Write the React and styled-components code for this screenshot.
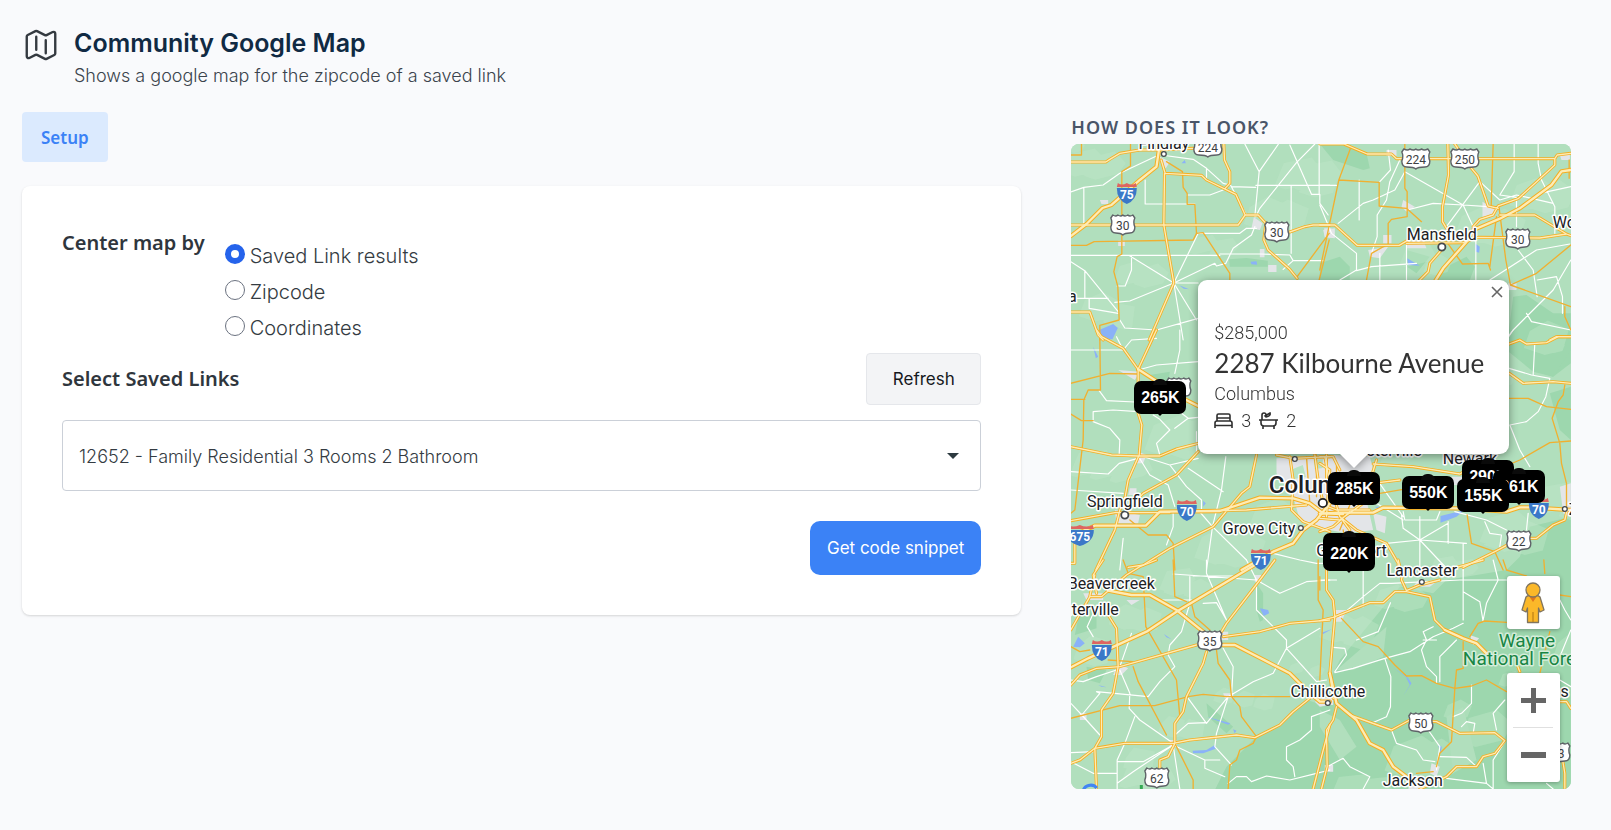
import React, { useState } from "react";
import styled, { createGlobalStyle } from "styled-components";

const GlobalStyle = createGlobalStyle`
  *, *::before, *::after { box-sizing: border-box; }
  body {
    margin: 0;
    background: #f9fafc;
    color: #2d3748;
    font-family: Inter, "Noto Sans", sans-serif;
    font-size: 18px;
    font-weight: 300;
  }
  button, select, input { font: inherit; color: inherit; }
`;

const label = `"Noto Sans", "Open Sans", sans-serif`;

/* ---------- page frame ---------- */

const Page = styled.main`
  padding: 27px 40px 40px 22px;
`;

const Header = styled.header`
  display: flex;
  gap: 14px;
  margin-bottom: 20px;
`;

const HeaderIcon = styled.svg`
  width: 38px;
  height: 38px;
  margin-top: -1px;
  flex: none;
  stroke: #343a40;
`;

const Title = styled.h1`
  margin: 0;
  font-size: 25px;
  line-height: 33px;
  font-weight: 600;
  color: #102a43;
`;

const Subtitle = styled.p`
  margin: 0;
  line-height: 32px;
  color: #3b444d;
`;

const Columns = styled.div`
  display: grid;
  grid-template-columns: 2fr 1fr;
  gap: 50px;
  align-items: start;
`;

/* ---------- form ---------- */

const Tab = styled.button`
  display: block;
  height: 50px;
  margin-bottom: 24px;
  padding: 0 19px;
  border: 0;
  border-radius: 4px;
  background: #dbeafe;
  color: #3b82f6;
  font-family: ${label};
  font-size: 17px;
  font-weight: 600;
`;

const Card = styled.form`
  padding: 40px;
  border-radius: 8px;
  background: #fff;
  box-shadow: 0 1px 3px rgba(0, 0, 0, 0.1), 0 1px 2px rgba(0, 0, 0, 0.06);
`;

const CenterBy = styled.div`
  display: flex;
  gap: 20px;
  margin-bottom: 7px;
`;

const FieldLabel = styled.label`
  font-family: ${label};
  font-size: 20px;
  line-height: 34px;
  font-weight: 600;
  color: #2f363d;
`;

const RadioList = styled.div`
  display: grid;
  padding-top: 12px;
`;

const RadioRow = styled.label`
  display: flex;
  gap: 5px;
  height: 36px;
  font-size: 20px;
  line-height: 36px;
  color: #343b42;
`;

const Radio = styled.input`
  appearance: none;
  width: 20px;
  height: 20px;
  margin: 6px 0 0;
  border: 1px solid #6b7280;
  border-radius: 50%;
  background: #fff;

  &:checked {
    border: 6px solid #2563eb;
  }
`;

const LinksRow = styled.div`
  display: flex;
  justify-content: space-between;
  align-items: center;
  margin-bottom: 15px;
`;

const RefreshButton = styled.button`
  width: 115px;
  height: 52px;
  border: 1px solid #e5e7eb;
  border-radius: 4px;
  background: #f3f4f6;
  color: #16191d;
  font-size: 17px;
  font-weight: 400;
`;

const SelectBox = styled.div`
  display: grid;
  grid-template-columns: 1fr 20px;
  align-items: center;
  margin-bottom: 30px;
`;

const Select = styled.select`
  grid-area: 1 / 1 / 2 / 3;
  appearance: none;
  width: 100%;
  height: 71px;
  padding: 2px 48px 0 16px;
  border: 1px solid #cbd0d8;
  border-radius: 4px;
  background: #fff;
  color: #343b42;
`;

const Arrow = styled.svg`
  grid-area: 1 / 2;
  justify-self: end;
  width: 12px;
  height: 6px;
  margin-right: 22px;
  fill: #2d3a40;
  pointer-events: none;
`;

const Actions = styled.div`
  display: flex;
  justify-content: flex-end;
`;

const PrimaryButton = styled.button`
  height: 54px;
  padding: 0 17px;
  border: 0;
  border-radius: 10px;
  background: #3b82f6;
  color: #fff;
  font-size: 17px;
  font-weight: 400;
`;

/* ---------- map preview ---------- */

const PreviewTitle = styled.h2`
  margin: 0;
  height: 32px;
  font-family: ${label};
  font-size: 18px;
  line-height: 30px;
  font-weight: 600;
  letter-spacing: 1px;
  color: #4a5568;
`;

const MapFrame = styled.div`
  position: relative;
  height: 645px;
  overflow: hidden;
  border-radius: 8px;
  background: #b1dfbd;
`;

const MapArt = styled.svg`
  display: block;
  width: 100%;
  height: 100%;
  font-family: Roboto, sans-serif;
  font-weight: 400;
`;

const Pin = styled.button`
  position: absolute;
  left: ${(p) => p.$x}px;
  top: ${(p) => p.$y}px;
  width: 52px;
  height: ${(p) => (p.$stacked ? 38 : 33)}px;
  padding: ${(p) => (p.$stacked ? 4 : 0)}px 0 0;
  border: 0;
  border-radius: 7px;
  background: #000;
  color: #fff;
  font-family: "Liberation Sans", Arial, sans-serif;
  font-size: 16px;
  font-weight: 700;

  &::before, &::after {
    content: "";
    position: absolute;
    left: 50%;
    transform: translateX(-50%);
  }
  &::before {
    top: -2px;
    width: 14px;
    height: 6px;
    border-radius: 7px 7px 0 0;
    background: #0b0b0b;
  }
  &::after {
    bottom: -2px;
    border: 2px solid transparent;
    border-top-color: #000;
    border-bottom: 0;
  }
`;

const InfoWindow = styled.article`
  position: absolute;
  left: 127px;
  top: 136px;
  width: 311px;
  height: 174px;
  padding: 40px 16px 0;
  border-radius: 9px;
  background: #fff;
  color: #333;
  font-family: Roboto, sans-serif;
  filter: drop-shadow(0 2px 5px rgba(0, 0, 0, 0.4));

  &::after {
    content: "";
    position: absolute;
    left: 141px;
    top: 173px;
    border: 15px solid transparent;
    border-top-color: #fff;
    border-bottom: 0;
  }
`;

const InfoText = styled.p`
  margin: 0;
  line-height: 26px;
  font-size: 18px;
`;

const InfoTitle = styled.h3`
  margin: 0;
  font-family: Lato, sans-serif;
  font-size: 26px;
  line-height: 35px;
  font-weight: 400;
  white-space: nowrap;
`;

const Facts = styled.div`
  display: flex;
  align-items: center;
  gap: 8px;
  height: 27px;
  font-size: 18px;
`;

const FactIcon = styled.svg`
  width: 19px;
  height: 18px;
  fill: none;
  stroke: #2e2e2e;
  stroke-width: 1.6;
`;

const CloseButton = styled.button`
  position: absolute;
  top: 0;
  right: 0;
  width: 25px;
  height: 24px;
  padding: 0;
  border: 0;
  background: none;

  svg { display: block; margin: 6px 7px; stroke: #666; stroke-width: 1.6; }
`;

const Controls = styled.div`
  position: absolute;
  right: 11px;
  bottom: 7px;
  display: grid;
  gap: 44px;
  width: 53px;
`;

const ControlBox = styled.div`
  display: grid;
  justify-items: center;
  border-radius: 3px;
  background: #fff;
  box-shadow: 0 1px 4px rgba(0, 0, 0, 0.3);
`;

const ControlButton = styled.button`
  display: grid;
  place-items: center;
  width: 100%;
  height: ${(p) => (p.$tall ? 54 : 53)}px;
  padding: 0;
  border: 0;
  background: none;
`;

const Divider = styled.span`
  width: 40px;
  height: 1px;
  background: #e0e0e0;
`;

/* ---------- map data: six sheets, each drawn at three units per pixel ---------- */

const sheets = [
  {
    at: [-11, -44],
    forest: ["M508 478L560 474L624 482V500H510Z"],
    town: ["M120 300H145V312H125Z", "M300 170L330 185L318 205L304 190Z", "M175 422H195V438H175Z", "M582 352L608 370L600 390L575 385Z", "M600 447H614V472H600Z", "M625 495H650V516H625Z", "M793 385H815V412H795Z"],
    water: ["M118 690L160 672L174 684L158 718H120Z", "M365 190L375 180L378 190Z", "M572 485L590 484L592 494L575 493Z", "M358 556L388 568L372 566Z"],
    minor: ["M33 276L72 262L130 255L180 220L290 168", "M72 262V372", "M256 240V312H405", "M304 165L400 178L440 205V232M440 205L490 250L512 255", "M382 285H450L490 270", "M512 255L560 345M515 260L588 262", "M555 132L598 215L585 350M656 132L598 215", "M690 135L755 283H780V310L805 345M778 132V283", "M765 132L710 188L600 325L588 350", "M694 256V460M588 256H810", "M33 466H480M342 549L415 400H540L560 385H590", "M585 380L575 405L520 445L498 490L470 498L465 490L342 549", "M33 485L75 512L175 635M207 466L342 549M215 466V510L196 558H172", "M75 512V595M33 595H145M342 549H415M342 549L410 660M342 549L370 720", "M165 607L210 603L342 549M480 462H600L690 465L700 482H790M88 595V625L175 640", "M180 660L195 684L290 690L415 655M700 482L670 508"],
    road: ["M33 165H65V132M212 132V198L186 215V462L172 470L162 515L174 560L178 660L120 676V720", "M320 185L368 215L370 262L382 280V313H405L410 400L430 398L510 520V540", "M33 436H80L103 425L400 420L410 400", "M808 400L712 530M808 420L778 540"],
    highway: ["M33 186H138L150 178L180 160L240 150H300L400 145", "M33 375H535L556 345H595L618 370L612 420L625 450L690 508L712 535", "M304 180L316 220L425 226L440 240L528 283L556 345", "M314 220L312 375L342 549L268 720", "M492 132L494 180L510 215V250L495 266", "M690 396L735 380L760 375H810", "M33 636H90L115 705L130 720"],
    freeway: ["M33 408L80 372L128 324L155 315L240 240L290 200L300 132"],
  },
  {
    at: [249, -44],
    forest: ["M260 450L330 470L290 520L262 500Z", "M380 500L440 470L465 500L450 540H350Z", "M580 590L620 585L700 640L753 640V790L700 830L640 815L560 750Z", "M0 490L60 470L90 500V540H0Z", "M0 132H70L140 160L150 205L130 210L40 180Z"],
    town: ["M488 305L530 330L520 352L488 350Z", "M200 150H230V168H200Z", "M250 300L285 320L260 335L245 320Z", "M190 405H215V430H190Z", "M145 450L205 440L180 475L150 470Z", "M262 425L310 420L320 445H262Z", "M10 390L45 385V415L15 412Z", "M720 165L750 160V180H725Z", "M565 550H590V570H565Z"],
    water: ["M262 475L300 497L265 495Z", "M465 430L480 440L478 458L468 455Z"],
    minor: ["M205 150L212 210L180 245M240 180L210 245L200 300L172 345V410L155 460", "M255 215L430 315L505 320M255 215L225 270L160 300L130 310L55 370", "M118 240V360M0 256H50M583 132V215L540 285L590 292V380", "M655 132V190L665 240L705 320V400M480 245L380 380M480 245L540 300L590 285L700 310", "M262 330L340 310L430 315L460 380M0 315L35 400L110 460V510L60 540", "M180 460V540M260 430V540M468 420V540M572 430V400", "M595 450L640 510L652 590M510 540L650 450L750 432M753 480L700 570L580 690L560 720", "M652 540L710 530L728 590V640M620 640L635 665L753 690M753 260L660 280M110 512L155 500L290 490"],
    road: ["M92 145L57 240L0 510M57 240L178 247V318L260 325L305 365", "M255 132V265L262 275V350L215 358L205 370V432L155 460L140 540", "M520 132L514 320M538 325L558 480L572 555M530 350L510 500", "M380 425L428 492L505 490L512 510M753 435L650 520L572 555L753 620", "M735 620V650L753 690M748 235V180"],
    highway: ["M0 132H72L142 162H215L230 176H705L712 165L753 160", "M384 132L386 225L368 320V365L380 385", "M405 132L455 205L474 228L505 318L535 325", "M260 430L430 428L475 412L660 414L740 402L753 407", "M705 176V195L595 296L535 318L520 345L480 358L460 380", "M540 345H645L740 402", "M295 545L325 515L330 490L365 450", "M690 720L710 710H753", "M0 375H45L112 436H238L262 422"],
    freeway: ["M345 545L370 505L445 420L460 390L540 356L600 325L695 255L725 214L753 210"],
  },
  {
    at: [-11, 186],
    forest: ["M270 135L330 125L325 160L290 165Z"],
    town: ["M175 120L240 125L225 150Z", "M210 475H230V495H205Z", "M165 540L240 555L235 580H170Z", "M235 365L260 375L250 400H225Z", "M650 385L810 375L930 380L945 440L920 510L940 600L860 610L810 600L720 570L700 500L650 430Z"],
    water: ["M118 0H165L150 25L125 20Z", "M100 50L115 80L108 85Z", "M430 512L438 520L430 530Z"],
    minor: ["M33 60H190L215 30L290 25M190 60L170 20", "M235 120L290 105L415 95M360 0V60L345 130M118 182L140 212L225 216", "M100 245V275L150 295L180 330L178 375M100 245L160 240L235 245", "M280 255L300 268L330 300L290 340L300 375M235 375L330 405L415 385", "M33 425L145 432L178 400L235 385M385 265L345 295M410 305V370", "M330 405L380 470L425 510V540M498 380L485 480L458 590M385 415L490 485", "M235 378L270 435L325 465L345 530M33 480L190 490M340 550V590L320 645", "M458 590L440 720M458 590L560 690M640 670L720 690L770 700H810", "M190 625L180 720M458 590L415 540M280 240L345 235L385 265L415 262"],
    road: ["M120 20L122 180H85L72 210L70 330L45 540L33 550", "M33 160L150 130L235 132M33 208H75M33 252L65 272H100", "M210 570L265 615H320L340 640L345 720", "M770 375V500M740 380L750 520"],
    highway: ["M110 0L125 20L190 55L235 118", "M290 0L235 118V250L246 285L238 375L205 450L196 500L180 540L165 600L108 720", "M33 350L155 375L235 378H300L350 357L415 340", "M33 572L165 548H330", "M410 543L560 540L740 525", "M196 548L250 490L350 435L415 365", "M205 712L250 705L330 655L460 590L545 490L570 470L590 375", "M690 380L700 450L695 540L730 575L810 605", "M765 375L775 450L790 520", "M650 375L700 385L810 380M800 375V490", "M45 640V700H33"],
    freeway: ["M235 118L300 160L340 190L395 218L415 228", "M33 620L105 587H258L300 545L480 543L600 503L700 505L750 520L790 550L850 552", "M545 720L640 665L700 640L730 600L770 570L810 520"],
  },
  {
    at: [249, 186],
    forest: ["M568 0H753V60L700 140L640 120L570 60Z", "M753 170L690 190L720 300L753 330Z", "M630 590L753 560V720H560L600 680Z"],
    town: ["M160 550L200 560L195 610L170 600Z", "M395 440H435V465H390Z", "M720 470L753 460V560L730 550Z", "M115 405L160 400L150 425Z"],
    water: ["M362 558L425 542H432L410 560L362 578Z", "M165 530L185 530L180 540Z"],
    minor: ["M568 115L635 135L690 145L678 200L655 245L620 275L570 285M645 38L640 135", "M570 285L600 360L630 410M250 545L255 570H350L360 545", "M170 520L250 570M245 555L250 595L300 630L440 640M300 560V720", "M385 580L300 630L200 640M430 640V720M300 630L385 720", "M495 575L510 610L545 615L540 650M405 545L500 570L560 600M625 550L620 600M568 15L580 0", "M165 440L250 560M385 575V640"],
    road: ["M568 205H625L680 230L753 238M735 165L730 195L715 215L697 265L720 340L725 400L740 460V540", "M753 333L690 338L600 390L530 420M180 490L250 478", "M442 555L455 640L525 665L550 720M70 600L90 720", "M50 400V540M100 500L60 600"],
    highway: ["M0 400L30 420L20 560M15 380L30 460L60 560L90 600", "M0 565L60 570L130 520L170 390M0 380H40L60 420", "M0 520L50 540H150", "M160 402L280 410L420 432L440 420", "M0 605L40 590L90 545M60 560L110 600L200 640L235 700V720", "M430 712L525 665L600 625H650L700 585L735 570L742 540", "M568 130L610 160L700 155L753 160", "M568 42L600 30L620 42L680 38L715 20H753", "M110 510L160 460L240 450"],
    freeway: ["M0 551L60 548H160L190 533L420 535L560 545L600 532H630L753 540"],
  },
  {
    at: [-11, 416],
    forest: ["M590 70L610 100V180L600 185L590 150Z", "M590 530L660 495L740 420L810 440V700H460L500 620Z", "M60 150H110V205L45 225Z", "M80 320L140 330L120 370L85 360Z", "M440 430L520 500L500 520L445 470Z"],
    town: ["M175 310L205 325L185 345H160Z", "M200 120H240L215 135Z", "M70 100H130V120H80Z", "M480 215H505V240H485Z", "M330 540H350V560H330Z", "M60 460H80V480H60Z", "M490 400H520V415H495Z", "M765 425L810 410V435L780 440Z", "M585 45H605V65H585Z"],
    water: ["M40 260L55 230L75 250L60 262Z", "M398 572L440 570L465 555L468 566L430 580H400Z", "M600 145L625 150L628 160L612 168Z", "M440 470L512 490L505 494Z", "M312 222L335 238L320 232Z", "M115 375L140 382L125 380Z", "M520 508L530 512L524 520Z"],
    minor: ["M105 150L82 200L100 230M33 360L70 365L110 350L170 330", "M180 330L210 400L208 445L240 480L340 550M66 465L120 400L110 395L265 410L300 365L345 320L325 285L330 255L365 215L390 130V50", "M66 465L33 430M66 465L120 525M225 470L195 550L172 600V687", "M33 578L105 575M33 605L100 640H172M172 670L220 635L340 555M340 555L360 687", "M340 555L435 600H480M435 600V625L495 650M385 415L440 490L505 410", "M345 525L385 490L440 488M505 410L470 520L465 560L515 615", "M515 410L520 320L490 265M505 410L580 365L640 340L680 265L780 205", "M590 65V150L680 240L680 265L770 365L800 360M590 60L660 100L740 65L810 60", "M440 0V40L500 180M340 42L590 60M400 48H520M300 120H395", "M810 450L755 470V510L720 540L680 560V600L700 620L705 650", "M505 670L530 650H560L575 665L620 648L690 660L770 640L810 630", "M180 320L215 220M430 130L470 128L500 180M560 0L590 60", "M172 605L250 605L330 560"],
    road: ["M190 0L205 40L250 50L258 200L350 360L360 470", "M220 320L235 365L320 525M345 550L400 660V687", "M33 475L180 437H285L385 410L430 403L500 410H600L690 410", "M395 130L405 170L450 210M470 270L475 310L510 360L515 410L540 440L545 470L590 530L580 550L540 570L530 600L510 615L505 687", "M340 0L345 110L380 125M775 0V120L790 150L780 360", "M33 260L60 275L90 270M145 300L218 305"],
    highway: ["M33 210L90 110H125L200 45L240 20L290 0M105 45L90 108M130 0L100 45L110 100", "M145 165L170 205L175 320L160 400L125 450V530L105 565L60 600L33 610", "M33 375L60 345L110 325L180 320L410 255", "M485 215L500 190L600 60L645 0", "M490 230L600 215L690 190L810 180", "M440 275L430 310L380 410L370 455L345 490V550L325 590L300 600V630", "M105 565L195 550H340L390 540L530 525L585 533L660 495L700 455L750 415", "M105 565L110 687", "M810 495L785 590L760 687"],
    freeway: ["M145 92L215 105H270L350 150L430 215", "M33 322L85 295L260 215L350 155L590 12", "M490 255H525L690 340L740 390L780 425H810"],
  },
  {
    at: [249, 416],
    forest: ["M60 300L200 130L240 80L340 100L380 60L560 30L753 30V700H0V450L40 340Z"],
    light: ["M0 450L60 480L110 560L60 600L0 500Z", "M50 330L200 200L190 290L100 330Z", "M380 470L430 440L470 600L400 640Z"],
    town: ["M45 150L80 150L65 185H45Z", "M295 60L350 65L330 80H280Z", "M450 225L478 235L460 255Z", "M5 415L40 415V435H5Z", "M15 615H40V635H15Z", "M335 610L360 620L350 650L330 640Z", "M270 660H310V690H265Z"],
    water: ["M222 325L262 350L275 370L250 408L270 375L258 350Z", "M355 555L366 560L362 580Z", "M5 218L35 208L10 222Z"],
    minor: ["M130 0V140M0 60H50M212 128L175 215L110 240M40 262L75 265L80 285L45 335", "M45 338L100 325L195 295L270 275L340 230L400 205L430 190", "M195 295L213 350L212 440L200 470L155 490M60 170L130 110L180 70H215L420 60H560", "M430 30V180M430 95L480 125L490 185M520 0L535 60L500 130L490 180", "M340 200L310 215L320 240L305 270L320 320L350 350V370M310 240H350", "M410 240L360 290V365M455 375V430L425 460L400 470M425 500L440 485L465 490L460 520", "M555 420L520 460L530 510M215 510L230 550L290 570L310 600L345 605", "M325 510L360 560L350 630M360 590L440 592L470 620M380 655L500 670L520 687M500 670L490 610", "M555 545L520 600V687M22 620L70 595L90 620L150 650L130 687", "M720 360L753 380M720 290L753 210M680 670L700 687M720 120L735 150L753 180"],
    road: ["M65 175L130 245L175 260L225 315L260 348L305 347L350 370L405 385L455 378L500 360L560 395", "M430 245V325L410 330L405 385L395 545L360 580L350 620", "M450 230L475 190L495 183L560 187M550 0L560 30L620 48M675 40L672 0", "M690 215L660 340M720 105L753 110M290 640L340 635M0 90V50"],
    highway: ["M20 30V90L40 120L45 170L30 340L40 415", "M0 182L40 172L150 128H190L225 95H260L330 110L345 180L375 210L430 235", "M250 30L245 60L260 92L300 75L360 60M400 25L490 0M235 0L240 20", "M50 430L90 465L215 510L270 480L350 485L420 520L525 518L555 542L525 580L490 590L470 620H410L380 650L300 687", "M50 440L40 480L20 510L22 620L5 687", "M590 310L600 335M720 425H740L753 445M725 580L735 640V687"],
    freeway: ["M30 340L50 430L110 480L150 550L190 570L220 620L260 650", "M375 210L430 235L470 250L500 280"],
  },
];

// Scattered fields that break up the ground colour.
const fields = Array.from({ length: 90 }, (_, i) => {
  const x = (i * 137) % 500;
  const y = (i * 211 + (i % 7) * 29) % 645;
  const a = 8 + (i % 5) * 5;
  const b = 6 + (i % 4) * 5;
  return `M${x} ${y}l${a} ${-b / 2}l${b} ${a / 2}l${-a / 3} ${b}l${-a} ${a / 4}l${-b} ${-b / 3}z`;
}).join("");

const places = [
  { t: "Findlay", x: 93, y: 5, dot: [93, 10] },
  { t: "Lima", x: 6, y: 158, anchor: "end" },
  { t: "Mansfield", x: 371, y: 96, dot: [371, 103], big: true },
  { t: "Wooster", x: 482, y: 84, anchor: "start" },
  { t: "Springfield", x: 54, y: 363, dot: [54, 371], big: true },
  { t: "Grove City", x: 152, y: 390, anchor: "start", dot: [230, 384] },
  { t: "Groveport", x: 316, y: 412, anchor: "end" },
  { t: "Westerville", x: 351, y: 312, anchor: "end", dot: [224, 315] },
  { t: "Newark", x: 372, y: 320, anchor: "start" },
  { t: "Zanesville", x: 498, y: 371, anchor: "start", dot: [494, 365] },
  { t: "Beavercreek", x: 84, y: 445, anchor: "end" },
  { t: "Centerville", x: 48, y: 471, anchor: "end" },
  { t: "Lancaster", x: 351, y: 432, dot: [351, 438] },
  { t: "Chillicothe", x: 257, y: 553, dot: [257, 559] },
  { t: "Jackson", x: 342, y: 642 },
  { t: "Athens", x: 498, y: 553, anchor: "end" },
];

const usRoutes = [
  [137, 3, "224"], [52, 81, "30"], [206, 88, "30"], [345, 15, "224"], [394, 15, "250"], [447, 95, "30"],
  [108, 244, "68"], [448, 397, "22"], [139, 497, "35"], [86, 634, "62"], [350, 579, "50"], [487, 609, "33"],
];

const interstates = [[56, 50, "75"], [116, 367, "70"], [9, 392, "675"], [190, 416, "71"], [468, 365, "70"], [31, 507, "71"]];

const homes = [
  { price: "265K", x: 63, y: 237 },
  { price: "285K", x: 257, y: 328 },
  { price: "550K", x: 331, y: 332 },
  { price: "290K", x: 391, y: 316 },
  { price: "361K", x: 422, y: 326 },
  { price: "155K", x: 386, y: 335 },
  { price: "220K", x: 252, y: 389, stacked: true },
];

function Lines({ kind, stroke, width }) {
  return (
    <g fill="none" stroke={stroke} strokeWidth={width} strokeLinejoin="round" strokeLinecap="round">
      {sheets.map((s, i) => (
        <path key={i} transform={`translate(${s.at}) scale(.33333)`} d={s[kind].join("")} />
      ))}
    </g>
  );
}

function Areas({ kind, fill }) {
  return (
    <g fill={fill}>
      {sheets.map((s, i) => s[kind] && (
        <path key={i} transform={`translate(${s.at}) scale(.33333)`} d={s[kind].join("")} />
      ))}
    </g>
  );
}

function UsShield({ x, y, n }) {
  const k = n.length > 2 ? 14 : 12;
  return (
    <g transform={`translate(${x} ${y})`}>
      <path
        d={`M${-k + 2} -10Q${-k / 2 - 1} -8 ${-k / 2 + 1} -10Q-2 -8 0 -10Q2 -8 ${k / 2 - 1} -10Q${k / 2 + 1} -8 ${k - 2} -10L${k} -7Q${k - 2} -3 ${k} 2Q${k} 8 ${k - 5} 8Q2 8 0 10Q-2 8 ${-k + 5} 8Q${-k} 8 ${-k} 2Q${-k + 2} -3 ${-k} -7Z`}
        fill="#fff" stroke="#5f6368" strokeWidth="1.4" strokeLinejoin="round"
      />
      <text y="4.5" textAnchor="middle" fontSize="12" fill="#3c4043">{n}</text>
    </g>
  );
}

function Interstate({ x, y, n }) {
  const k = n.length > 2 ? 14 : 10;
  return (
    <g transform={`translate(${x} ${y})`}>
      <path d={`M${-k + 1} -11Q${-k / 2} -8 0 -11Q${k / 2} -8 ${k - 1} -11L${k} -7H${-k}Z`} fill="#de6560" />
      <path d={`M${-k} -6H${k}Q${k} 6 0 10Q${-k} 6 ${-k} -6Z`} fill="#3b78c8" />
      <text y="5" textAnchor="middle" fontSize="12" fontWeight="700" fill="#fff">{n}</text>
    </g>
  );
}

function OhioMap() {
  return (
    <MapArt viewBox="0 0 500 645" preserveAspectRatio="xMidYMid slice" role="img" aria-label="Map of central Ohio">
      <rect width="500" height="645" fill="#b1dfbd" />
      <Areas kind="forest" fill="#9dd7ae" />
      <path d={fields} fill="#bfe6c8" opacity="0.45" />
      <Areas kind="light" fill="#b1dfbd" />
      <Areas kind="town" fill="#e3e5e8" />
      <path d="M222 325l10-4 3 12-12 2zM243 316l9-1v9l-8 1z" fill="#b7e3c4" />
      <Areas kind="water" fill="#8ab2f8" />
      <Lines kind="minor" stroke="#fff" width="3.5" />
      <Lines kind="road" stroke="#f0b030" width="4" />
      <Lines kind="highway" stroke="#f4ae22" width="9" />
      <Lines kind="freeway" stroke="#f4ae22" width="13" />
      <Lines kind="highway" stroke="#fdecb5" width="4" />
      <Lines kind="freeway" stroke="#fdecb5" width="7" />

      {usRoutes.map(([x, y, n], i) => <UsShield key={i} x={x} y={y} n={n} />)}
      {interstates.map(([x, y, n], i) => <Interstate key={i} x={x} y={y} n={n} />)}

      {places.map((p) => p.dot && (
        <circle key={p.t} cx={p.dot[0]} cy={p.dot[1]} r={p.big ? 3.6 : 2.4} fill="#fff" stroke="#45494d" strokeWidth={p.big ? 1.8 : 1.3} />
      ))}
      <circle cx="252" cy="359" r="4.2" fill="#fff" stroke="#222" strokeWidth="1.8" />

      <g fontSize="16" fill="#202124" stroke="#fff" strokeWidth="3" strokeLinejoin="round" paintOrder="stroke">
        {places.map((p) => (
          <text key={p.t} x={p.x} y={p.y} textAnchor={p.anchor || "middle"}>{p.t}</text>
        ))}
        <text x="198" y="349" fontSize="24" fontWeight="500">Columbus</text>
        <g fill="#188544" stroke="#d5eedb" fontSize="19">
          <text x="456" y="503" textAnchor="middle">Wayne</text>
          <text x="392" y="521">National Forest</text>
        </g>
      </g>
      <path d="M12 648a8 8 0 0 1 14-4" fill="none" stroke="#4285f4" strokeWidth="3" />
      <path d="M69 641h3v4h-3z" fill="#34a853" />
    </MapArt>
  );
}

function Pegman() {
  return (
    <svg width="24" height="42" viewBox="0 0 24 42" aria-hidden="true">
      <path d="M5 15Q7 13 12 13Q17 13 19 15L23 28L19 30L17.500 26V40.500H6.500V26L5 30L1 28Z" fill="#fbb829" stroke="#80755f" strokeWidth="1.300" strokeLinejoin="round" />
      <path d="M8 14L12 20L16 14Z" fill="#e0761c" />
      <path d="M12 30V40" stroke="#c98b1a" strokeWidth="1.500" />
      <circle cx="12" cy="8" r="7" fill="#fbb829" stroke="#80755f" strokeWidth="1.300" />
    </svg>
  );
}

const centerOptions = ["Saved Link results", "Zipcode", "Coordinates"];

export default function App() {
  const [center, setCenter] = useState(centerOptions[0]);
  return (
    <>
      <GlobalStyle />
      <Page>
        <Header>
          <HeaderIcon viewBox="0 0 24 24" fill="none" strokeWidth="1.5" strokeLinecap="round" strokeLinejoin="round" aria-hidden="true">
            <path d="M9 6.750V15m6-6v8.250m.503 3.498 4.875-2.437c.381-.19.622-.58.622-1.006V4.820c0-.836-.88-1.380-1.628-1.006l-3.869 1.934c-.317.159-.69.159-1.006 0L9.503 3.252a1.125 1.125 0 0 0-1.006 0L3.622 5.689C3.240 5.880 3 6.270 3 6.695V19.180c0 .836.88 1.380 1.628 1.006l3.869-1.934c.317-.159.69-.159 1.006 0l4.994 2.497c.317.158.69.158 1.006 0Z" />
          </HeaderIcon>
          <div>
            <Title>Community Google Map</Title>
            <Subtitle>Shows a google map for the zipcode of a saved link</Subtitle>
          </div>
        </Header>

        <Columns>
          <section>
            <Tab type="button">Setup</Tab>
            <Card onSubmit={(e) => e.preventDefault()}>
              <CenterBy role="radiogroup" aria-labelledby="center-by">
                <FieldLabel as="span" id="center-by">Center map by</FieldLabel>
                <RadioList>
                  {centerOptions.map((o) => (
                    <RadioRow key={o}>
                      <Radio type="radio" name="center" checked={center === o} onChange={() => setCenter(o)} />
                      {o}
                    </RadioRow>
                  ))}
                </RadioList>
              </CenterBy>
              <LinksRow>
                <FieldLabel htmlFor="saved-link">Select Saved Links</FieldLabel>
                <RefreshButton type="button">Refresh</RefreshButton>
              </LinksRow>
              <SelectBox>
                <Select id="saved-link">
                  <option>12652 - Family Residential 3 Rooms 2 Bathroom</option>
                </Select>
                <Arrow viewBox="0 0 12 6"><path d="M0 0H12L6 6Z" /></Arrow>
              </SelectBox>
              <Actions>
                <PrimaryButton type="submit">Get code snippet</PrimaryButton>
              </Actions>
            </Card>
          </section>

          <section>
            <PreviewTitle>HOW DOES IT LOOK?</PreviewTitle>
            <MapFrame>
              <OhioMap />
              {homes.map((h) => (
                <Pin key={h.price} type="button" $x={h.x} $y={h.y} $stacked={h.stacked}>{h.price}</Pin>
              ))}
              <InfoWindow>
                <CloseButton type="button" aria-label="Close">
                  <svg width="12" height="12" viewBox="0 0 12 12"><path d="M1 1L11 11M11 1L1 11" /></svg>
                </CloseButton>
                <InfoText>$285,000</InfoText>
                <InfoTitle>2287 Kilbourne Avenue</InfoTitle>
                <InfoText>Columbus</InfoText>
                <Facts>
                  <FactIcon viewBox="0 0 19 18" aria-label="Bedrooms">
                    <path d="M3 9V3.500Q3 2 4.500 2H14.500Q16 2 16 3.500V9M3 6H16M1 16V11Q1 9 3 9H16Q18 9 18 11V16M1 13.500H18" />
                  </FactIcon>
                  3
                  <FactIcon viewBox="0 0 19 18" aria-label="Bathrooms">
                    <path d="M0 8H19M2 8V11Q2 14 5 14H14Q17 14 17 11V8M4 14V17M15 14V17M3 8V3Q3 1 5 1Q7 1 7 3M6 4L11 1Q12 4 7 5Z" />
                  </FactIcon>
                  2
                </Facts>
              </InfoWindow>
              <Controls>
                <ControlBox>
                  <ControlButton type="button" aria-label="Street view"><Pegman /></ControlButton>
                </ControlBox>
                <ControlBox>
                  <ControlButton type="button" $tall aria-label="Zoom in">
                    <svg width="25" height="25" viewBox="0 0 25 25"><path d="M10 0H15V10H25V15H15V25H10V15H0V10H10Z" fill="#666" /></svg>
                  </ControlButton>
                  <Divider />
                  <ControlButton type="button" $tall aria-label="Zoom out">
                    <svg width="25" height="6" viewBox="0 0 25 6"><path d="M0 0H25V6H0Z" fill="#666" /></svg>
                  </ControlButton>
                </ControlBox>
              </Controls>
            </MapFrame>
          </section>
        </Columns>
      </Page>
    </>
  );
}
